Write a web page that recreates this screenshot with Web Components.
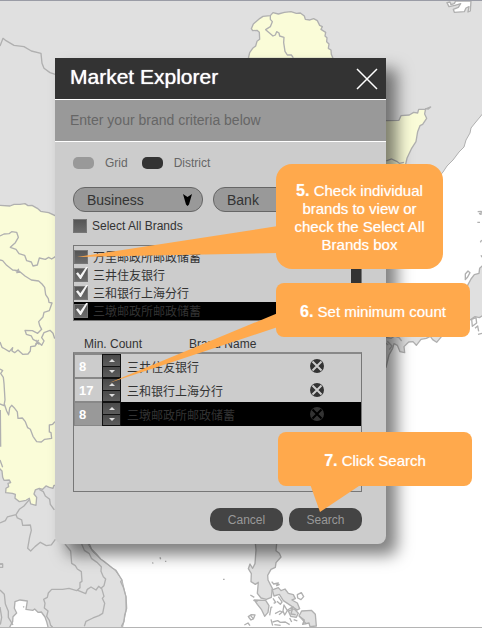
<!DOCTYPE html>
<html lang="en">
<head>
<meta charset="utf-8">
<title>Market Explorer</title>
<style>
  html, body { margin: 0; min-height: 100%; }
  body { font-family: "Liberation Sans", "Noto Sans CJK SC", sans-serif; font-size: 12px; color: #333; background: #fff; }
</style>
</head>
<body>
<market-page></market-page>

<script>
const define = (name, html, setup) => {
  const template = document.createElement('template');
  template.innerHTML = html;
  customElements.define(name, class extends HTMLElement {
    connectedCallback() {
      if (this.shadowRoot) return;
      const root = this.attachShadow({ mode: 'open' });
      root.append(template.content.cloneNode(true));
      if (setup) setup(this, root);
    }
  });
};

/* Map of the region behind the dialog */
define('region-map', `
<style>
  :host { display: block; overflow: hidden; border-top: 1px solid #9a9ca6; border-bottom: 1px solid #b4b4b4; box-sizing: border-box; }
  svg { display: block; width: 100%; height: 100%; }
  path { fill: none; stroke: #b0b0b0; stroke-width: 4; stroke-linejoin: round; }
  .coast { stroke-width: 1; }
  .land { fill: #e0e0e0; }
  .sea { fill: #fff; }
  .hot { fill: #fafcd8; }
</style>
<svg viewBox="0 1 482 626" preserveAspectRatio="xMinYMin slice" aria-hidden="true">
  <rect class="land" width="482" height="628"/>
  <path class="sea coast" d="M484 112L480 117L475 123L471 128L470 133L466 140L464 147L459 152L453 160L447 166L443 172L420 200L380 240L380 400L88 544L93 552L103 561L115 570L122 580L126 597L126 611L122 630L484 630Z"/>
  <g transform="scale(.3333)">
    <path d="M0 138L9 115L18 122L42 136L72 140L94 153L123 160L126 190L132 205L150 218L168 224"/>
  </g>
  <g transform="translate(241 0) scale(.3333)">
    <path class="hot" d="M22 175L26 158L35 145L44 138L48 124L56 118L55 97L48 91L35 92L31 86L37 72L57 55L66 49L88 47L96 38L112 42L130 37L150 35L166 40L178 39L190 48L193 58L207 60L218 56L229 62L236 76L244 80L240 88L254 97L252 108L258 113L257 125L264 132L262 145L270 150L271 163L276 175Z"/>
    <path d="M88 48L88 58L94 65L88 80L74 89L96 108L103 105L107 95L114 99L116 108L129 112L128 128L132 154L139 165L151 165L157 174"/>
    <path class="hot" d="M430 362L474 361L480 347L505 345L518 337L530 339L533 328L551 328L569 321L562 327L554 326L551 342L557 355L545 373L537 377L530 395L525 425L512 445L498 475L490 510L430 510Z"/>
    <path class="sea" d="M618 8L627 6L630 14L640 11L644 3L690 3L688 33L681 36L684 20L675 24L670 35L640 37L637 28L652 22L659 11L642 16L624 20Z"/>
  </g>
  <g transform="translate(0 150) scale(.3333)">
    <path class="hot" d="M-5 166L30 168L42 163L60 163L75 161L84 167L96 166L112 175L122 184L146 188L170 199L170 1006L162 1006L159 1015L148 1012L138 1008L128 1018L118 1015L106 1020L102 1032L110 1042L108 1066L92 1062L88 1045L78 1051L58 1055L45 1045L46 1033L37 1030L17 1028L18 1015L26 1010L24 1000L32 998L28 990L12 991L8 982L6 963L-5 952Z"/>
    <path d="M0 258L12 252L27 251L35 245L50 247L55 262L46 278L31 292L48 298L57 311L74 316L80 332L94 336L99 348L112 345L118 324L136 328L146 322L155 327L166 320"/>
    <path d="M0 330L8 332L20 346L38 360L56 362L75 378L94 390L116 393L126 402L134 412L137 434L145 446L147 457L156 459L148 482L132 487L129 501L116 515L119 527L125 538L113 550L97 542L75 541L79 553L94 558L99 568L114 576L105 588L92 590L91 603L84 612L68 613L54 600L44 608L36 603L38 593L28 605L15 597L6 592L0 576M114 576L125 586L132 573L125 563L132 548L150 541L159 550L164 566M107 570L118 584M116 570L106 584M45 361L60 367M56 356L50 370"/>
    <path d="M0 657L8 662L2 670L10 682L12 700L15 750L12 767L0 762M13 762L20 783L26 795L29 774L35 766L44 775L52 786L54 805L67 804L76 815L83 833L91 838L99 859L110 875L124 876L134 868L155 865L153 848L148 846L148 825L158 823L165 815M1 780L2 890M0 930L8 952"/>
    <path d="M0 1119L16 1112L22 1101L48 1094L58 1078L72 1068L88 1049M48 1094L52 1104L65 1110L68 1126L91 1125L94 1141L89 1161L83 1195L92 1203L105 1190L121 1177L139 1187L154 1185L166 1168M118 1018L130 1025L136 1038L149 1048L151 1063L163 1080M0 1242L8 1242L8 1252L0 1252"/>
  </g>
  <g transform="translate(0 500) scale(.3333)">
    <path class="sea" d="M27 385L38 365L39 350L50 339L43 325L45 305L60 300L82 303L78 328L99 331L104 327L114 337L124 336L135 351L140 365L145 385Z"/>
    <path d="M195 132L212 153L215 190L226 197L232 207L244 215L246 244L240 248L240 263L230 272L207 265L188 268L155 268L145 279L142 292L131 298L135 310L133 324L144 333L140 349L148 361L152 376L158 382M245 132L253 151L268 161L275 176L291 187L304 200L303 214L310 230L317 237L312 257L303 265L296 259L288 270L273 261L262 268L257 281L230 270M305 265L312 289L307 295L314 310L308 340L297 347L279 354L258 364L253 379M0 270L13 283L16 312L25 334L25 352L39 375M0 321L5 352L1 374M0 192L8 192"/>
    <path d="M268 132L275 148L289 162L302 177L313 185L325 194L337 204L348 211L366 240L362 245L370 262L378 290L380 325L374 345L372 365L364 380M480 172L482 178M497 182L497 186M457 190L460 188M669 238L674 238M70 319L72 322"/>
  </g>
  <g transform="translate(241 500) scale(.3333)">
    <path class="land" d="M42 120L45 150L42 191L35 205L27 192L22 206L31 221L30 245L43 253L52 247L49 280L60 294L76 298L91 292L94 265L81 240L80 226L90 208L103 202L105 188L120 171L115 160L105 152L108 120Z"/>
    <path class="land" d="M40 300L74 301L84 317L81 337L71 349L61 328L49 313ZM94 270L112 263L120 272L132 267L142 280L157 284L163 296L153 300L169 309L176 326L169 330L145 314L127 302L115 283L99 288ZM142 333L160 327L172 340L166 352L149 349ZM174 348L182 333L211 331L223 343L226 378L207 380L204 369L185 373L190 360Z"/>
    <path d="M92 245L98 252L112 249L107 257L116 253M28 285L40 292M37 301L50 304M10 375L21 369L27 377M22 350L31 344L42 345L37 357L30 360L25 354ZM29 347L36 355M96 295L104 307L98 310M112 290L123 306L118 313L108 304M169 284L181 278L188 290L180 299L170 294ZM86 346L90 322L94 321M102 341L117 333L124 336L114 344M129 315L139 332L131 345L126 333ZM95 366L110 362L118 367L133 366L146 374M100 374L119 376M158 359L169 363M90 358L95 377M146 354L152 366M140 330L156 320L150 342L164 344M176 350L196 372"/>
  </g>
  <g transform="translate(380 90) scale(.3333)">
    <path class="land" d="M310 525L299 535L297 550L283 554L273 567L264 584L250 610L200 720L180 745L170 757L158 749L151 739L139 745L123 748L109 766L99 755L86 756L72 770L74 788L60 785L52 766L42 761L38 775L27 795L18 832L10 835L10 720L230 700L270 690L285 680L298 683L310 676Z"/>
    <path d="M256 552L264 543L270 548L263 561L256 569ZM293 365L304 364L303 373L297 370M292 397L300 397M301 457L305 450M303 496L306 502M275 688L288 683L290 699L277 709ZM285 715L293 708L296 724M294 733L306 730M18 742L34 745L44 738L58 744L65 753M22 754L36 768L28 779M18 760L25 765M19 213L35 207L50 214L58 220L72 217"/>
  </g>
</svg>`);

define('mode-option', `
<style>
  :host { display: block; }
  label { display: flex; align-items: center; gap: 11px; line-height: 14px; color: #666; }
  input { appearance: none; width: 21px; height: 12px; margin: 0; border-radius: 5px; background: #999; }
  input:checked { background: #333; }
</style>
<label><input type="radio"><slot></slot></label>`,
(host, root) => { root.querySelector('input').checked = host.hasAttribute('checked'); });

define('category-select', `
<style>
  :host { display: grid; align-items: center; flex: 0 1 130px; min-width: 0; }
  select, svg { grid-area: 1 / 1; }
  select { appearance: none; box-sizing: border-box; width: 100%; height: 25px; padding: 0 26px 0 13px; border: 1px solid #666; border-radius: 12px; background: #999; color: #333; font: 14px "Liberation Sans", sans-serif; }
  svg { justify-self: end; margin-right: 11px; pointer-events: none; }
</style>
<select></select>
<svg width="9" height="12" viewBox="0 0 18 24"><path d="M0 0L9 6L18 0L12 21L9 24L6 21Z" fill="#000"/></svg>`,
(host, root) => {
  const select = root.querySelector('select');
  select.setAttribute('aria-label', host.getAttribute('label'));
  select.add(new Option(host.getAttribute('value')));
});

define('check-option', `
<style>
  :host { display: block; }
  label { display: flex; align-items: center; gap: 5px; line-height: var(--row, 14px); white-space: nowrap; }
  span { padding-top: var(--drop, 0); }
  input { appearance: none; position: relative; flex: none; box-sizing: border-box; width: 14px; height: 14px; margin: 0; border: 1px solid #777; background: linear-gradient(#555, #6c6c6c); }
  input:checked::after { content: ""; position: absolute; left: 1px; top: -2px; width: 12px; height: 12px; background: #f4f4f4; clip-path: polygon(0 55%, 16% 43%, 36% 68%, 84% 0, 100% 0, 42% 100%, 34% 100%); }
</style>
<label><input type="checkbox"><span><slot></slot></span></label>`,
(host, root) => { root.querySelector('input').checked = host.hasAttribute('checked'); });

define('brand-list', `
<style>
  :host { display: grid; grid-template-columns: 1fr 10px; box-sizing: border-box; height: 76px; border: 1px solid #777; overflow: hidden; --row: 16px; --drop: 2px; }
  .rows { padding-top: 2px; min-width: 0; }
  .thumb { height: 37px; background: #333; }
  .on { background: #000; color: #333; }
</style>
<div class="rows">
  <check-option>万里邮政所邮政储蓄</check-option>
  <check-option checked>三井住友银行</check-option>
  <check-option checked>三和银行上海分行</check-option>
  <check-option checked class="on">三墩邮政所邮政储蓄</check-option>
</div>
<div class="thumb"></div>`);

define('count-field', `
<style>
  :host { display: grid; grid-template-columns: 28px 19px; height: 24px; box-sizing: border-box; }
  input { box-sizing: border-box; width: 28px; height: 24px; margin: 0; padding: 0 0 0 4px; border: solid #888; border-width: 1px 0 1px 1px; border-radius: 0; background: var(--field, #ccc); color: #fff; font: bold 13px "Liberation Sans", sans-serif; }
  div { display: grid; grid-template-rows: 1fr 1fr; gap: 1px; padding: 1px; background: #111; }
  button { display: grid; place-items: center; min-height: 0; padding: 0; border: 0; background: linear-gradient(#4a4a4a, #5c5c5c); }
  svg { display: block; }
</style>
<input type="text" inputmode="numeric" aria-label="Minimum count">
<div>
  <button type="button" aria-label="Increase"><svg width="6" height="3" viewBox="0 0 6 3"><path d="M0 3L3 0L6 3Z" fill="#ddd"/></svg></button>
  <button type="button" aria-label="Decrease"><svg width="6" height="3" viewBox="0 0 6 3"><path d="M0 0L3 3L6 0Z" fill="#ddd"/></svg></button>
</div>`,
(host, root) => { root.querySelector('input').value = host.getAttribute('value'); });

define('remove-button', `
<style>
  :host { display: block; color: #333; --cross: #ccc; }
  :host([dim]) { --cross: #000; }
  button { display: block; padding: 0; border: 0; background: none; color: inherit; }
  svg { display: block; }
</style>
<button type="button" aria-label="Remove brand">
  <svg width="14" height="14" viewBox="0 0 28 28"><circle cx="14" cy="14" r="14" fill="currentColor"/><path d="M5 5L23 23M23 5L5 23" stroke="var(--cross)" stroke-width="4"/></svg>
</button>`);

define('brand-table', `
<style>
  :host { display: block; }
  table, thead, tbody { display: block; }
  tr { display: grid; grid-template-columns: 47px 1fr 14px; align-items: center; column-gap: 6px; padding-right: 37px; }
  th, td { padding: 0; text-align: left; }
  thead tr { grid-template-columns: 95px 1fr; column-gap: 10px; padding: 0 0 0 11px; }
  th { font-weight: normal; line-height: 16px; }
  tbody { box-sizing: border-box; height: 140px; border: 1px solid #777; border-top: 2px solid #888; }
  tbody tr { height: 24px; }
  .on { background: #000; --field: #999; }
</style>
<table>
  <thead><tr><th scope="col">Min. Count</th><th scope="col">Brand Name</th></tr></thead>
  <tbody>
    <tr><td><count-field value="8"></count-field></td><td>三井住友银行</td><td><remove-button></remove-button></td></tr>
    <tr><td><count-field value="17"></count-field></td><td>三和银行上海分行</td><td><remove-button></remove-button></td></tr>
    <tr class="on"><td><count-field value="8"></count-field></td><td>三墩邮政所邮政储蓄</td><td><remove-button dim></remove-button></td></tr>
  </tbody>
</table>`);

define('pill-button', `
<style>
  :host { display: block; }
  button { display: block; height: 23px; min-width: 73px; padding: 0 16px; border: 0; border-radius: 10px; background: #444; color: #999; font: 12px "Liberation Sans", sans-serif; }
</style>
<button type="button"><slot></slot></button>`);

define('explorer-dialog', `
<style>
  :host { display: block; background: #ccc; border-radius: 0 0 8px 8px; box-shadow: 11px 11px 16px rgba(0, 0, 0, .5); }
  header { display: flex; align-items: center; justify-content: space-between; height: 41px; padding: 0 8px 0 15px; background: #333; border-bottom: 1px solid #fff; }
  h1 { margin: 0 0 4px; font-size: 21px; line-height: 24px; font-weight: normal; color: #fff; text-shadow: 0 0 1px #fff; }
  .close { padding: 0; border: 0; background: none; }
  svg { display: block; }
  p { margin: 0; padding: 0 15px; line-height: 41px; font-size: 14px; color: #666; background: #999; border-bottom: 1px solid #fff; }
  form { padding: 14px 24px 13px 18px; }
  .modes { display: flex; gap: 14px; margin-bottom: 17px; }
  .selects { display: flex; gap: 10px; margin-bottom: 7px; }
  brand-list { margin: 12px 0 15px; }
  .actions { display: flex; justify-content: flex-end; gap: 6px; margin-top: 16px; }
</style>
<header>
  <h1>Market Explorer</h1>
  <button class="close" type="button" aria-label="Close"><svg width="22" height="22" viewBox="0 0 22 22"><path d="M1 1L21 21M21 1L1 21" stroke="#fff" stroke-width="1.500"/></svg></button>
</header>
<p>Enter your brand criteria below</p>
<form>
  <div class="modes"><mode-option>Grid</mode-option><mode-option checked>District</mode-option></div>
  <div class="selects"><category-select label="Sector" value="Business"></category-select><category-select label="Type" value="Bank"></category-select></div>
  <check-option>Select All Brands</check-option>
  <brand-list></brand-list>
  <brand-table></brand-table>
  <div class="actions"><pill-button>Cancel</pill-button><pill-button>Search</pill-button></div>
</form>`);

/* Step note; "tail" holds the pointer's corners, measured from the note's own corner */
define('step-note', `
<style>
  :host { display: flex; align-items: center; justify-content: center; box-sizing: border-box; padding-top: 3px; border-radius: 8px; background: #ffa94c; color: #fff; font-size: 15px; line-height: 18px; text-align: center; }
  svg { position: absolute; left: 0; top: 0; width: 1px; height: 1px; overflow: visible; pointer-events: none; }
  div { white-space: nowrap; text-shadow: 0 0 1px rgba(255, 255, 255, .6); }
  b { font-size: 16px; }
</style>
<svg aria-hidden="true"><polygon fill="#ffa94c"/></svg>
<div><b></b> <slot></slot></div>`,
(host, root) => {
  root.querySelector('polygon').setAttribute('points', host.getAttribute('tail'));
  root.querySelector('b').textContent = host.getAttribute('step') + '.';
});

define('market-page', `
<style>
  :host { display: grid; position: relative; box-sizing: border-box; min-height: 100vh; padding: 58px 96px 84px 55px; align-items: start; overflow: hidden; }
  region-map { position: absolute; inset: 0; }
  explorer-dialog { position: relative; min-width: 0; }
  step-note { position: absolute; }
  .check { left: 276px; top: 164px; width: 167px; height: 105px; border-radius: 16px; }
  .count { left: 276px; top: 283px; width: 194px; height: 54px; }
  .search { left: 278px; top: 432px; width: 194px; height: 54px; }
</style>
<region-map></region-map>
<explorer-dialog></explorer-dialog>
<step-note class="check" step="5" tail="2,62 -199,93 2,89">Check individual<br>brands to view or<br>check the Select All<br>Brands box</step-note>
<step-note class="count" step="6" tail="2,30 -167,100 2,44">Set minimum count</step-note>
<step-note class="search" step="7" tail="32,52 42,80 84,52">Click Search</step-note>`);
</script>
</body>
</html>
